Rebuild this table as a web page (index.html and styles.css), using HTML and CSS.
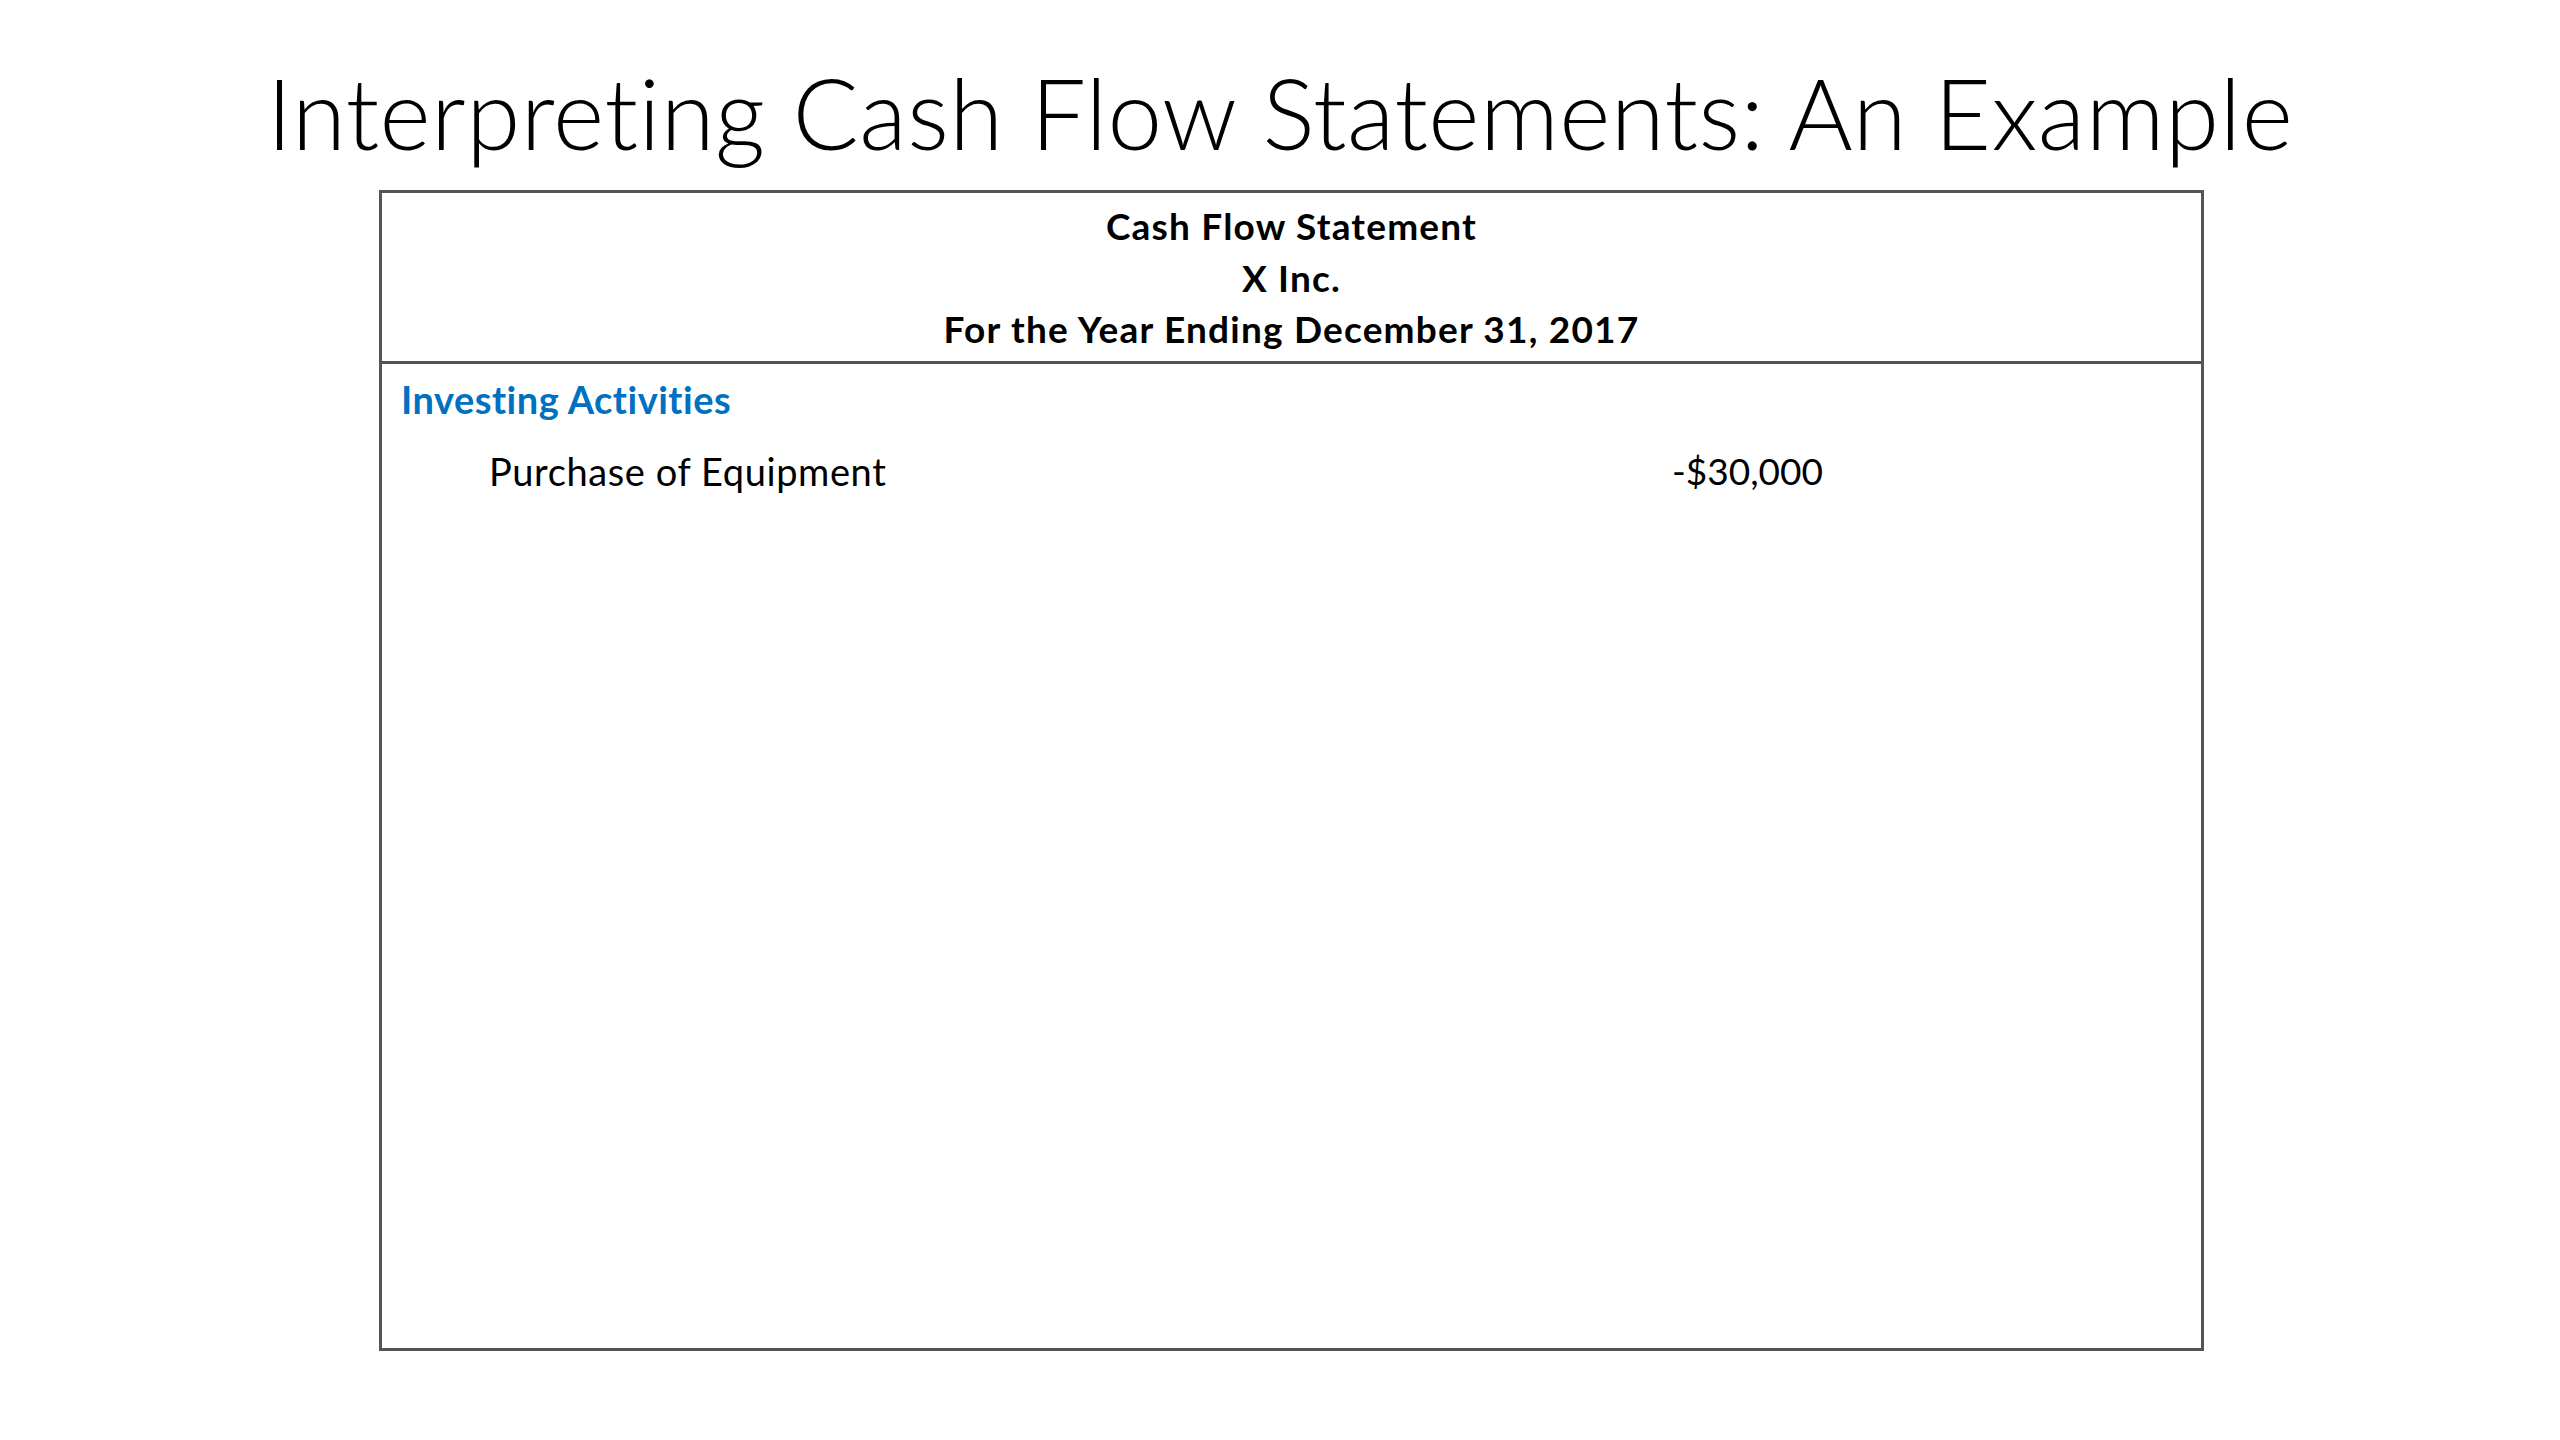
FILE: index.html
```html
<!DOCTYPE html>
<html lang="en">
<head>
<meta charset="utf-8">
<title>Interpreting Cash Flow Statements: An Example</title>
<link rel="stylesheet" href="styles.css">
</head>
<body>
<div class="slide">
  <h1 class="title">Interpreting Cash Flow Statements: An Example</h1>
  <section class="statement">
    <header class="statement-head">
      <div class="head-line">Cash Flow Statement</div>
      <div class="head-line">X Inc.</div>
      <div class="head-line">For the Year Ending December 31, 2017</div>
    </header>
    <div class="statement-body">
      <div class="section-label">Investing Activities</div>
      <div class="item-row">
        <span class="item-name">Purchase of Equipment</span>
        <span class="item-amount">-$30,000</span>
      </div>
    </div>
  </section>
</div>
</body>
</html>
```
FILE: styles.css
```css
html, body {
  margin: 0;
  padding: 0;
  background: #ffffff;
}

.slide {
  width: 2560px;
  height: 1440px;
  font-family: Lato, "Open Sans", "Liberation Sans", sans-serif;
  font-variant-ligatures: none;
  color: #000000;
  overflow: hidden;
}

.title {
  margin: 0;
  padding-top: 63px;
  font-size: 98px;
  line-height: 98px;
  font-weight: 300;
  text-align: center;
  letter-spacing: 0.45px;
}

.statement {
  margin: 29px 0 0 379px;
  width: 1825px;
  height: 1161px;
  box-sizing: border-box;
  border: 3px solid #555555;
  display: flex;
  flex-direction: column;
}

.statement-head {
  padding: 7px 0 6px;
  border-bottom: 3px solid #555555;
  text-align: center;
  font-weight: 700;
  font-size: 37px;
  line-height: 51.5px;
  letter-spacing: 1.2px;
}

.statement-body {
  padding: 10px 0 0 19px;
}

.section-label {
  color: #0070c0;
  font-weight: 700;
  font-size: 38px;
  line-height: 50px;
  letter-spacing: 0.5px;
}

.item-row {
  margin-top: 22px;
  padding-left: 88px;
  display: grid;
  grid-template-columns: 1183px auto;
  font-size: 38px;
  line-height: 50px;
}

.item-name {
  letter-spacing: 0.6px;
}

.item-amount {
  font-size: 37px;
}
```
